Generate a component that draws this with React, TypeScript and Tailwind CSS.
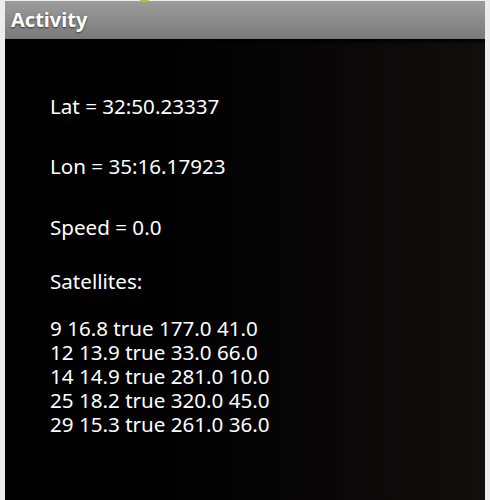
import React from "react";

const sats = [
  "9 16.8 true 177.0 41.0",
  "12 13.9 true 33.0 66.0",
  "14 14.9 true 281.0 10.0",
  "25 18.2 true 320.0 45.0",
  "29 15.3 true 261.0 36.0",
];

export default function App() {
  return (
    <div className="w-[490px] h-[500px] bg-[#ededed] pl-[5px] pr-[5px] pt-[1px] relative overflow-hidden" style={{ fontFamily: '"Noto Sans", "Open Sans", sans-serif' }}>
      <div className="absolute left-[140px] top-0 w-[9px] h-[2px] bg-[#a4c64a] rounded-b-full" />
      <div className="h-[38px] bg-gradient-to-b from-[#9c9c9c] to-[#7a7a7a] flex items-center pl-[6px]">
        <span className="text-white font-bold text-[20px] leading-none [text-shadow:0_1px_2px_rgba(0,0,0,0.6)]">Activity</span>
      </div>
      <div className="h-[461px] bg-gradient-to-r from-[#000000] via-[#050404] to-[#110e0e] text-white text-[20.6px] leading-[24px] pl-[45px] pt-[55px] relative">
        <div className="absolute left-0 right-0 top-0 h-[6px] bg-gradient-to-b from-[#000] to-transparent" />
        <div className="h-[24px]">Lat = 32:50.23337</div>
        <div className="h-[24px] mt-[36px]">Lon = 35:16.17923</div>
        <div className="h-[24px] mt-[37px]">Speed = 0.0</div>
        <div className="h-[24px] mt-[30px]">Satellites:</div>
        <div className="mt-[23px]">
          {sats.map((s) => (
            <div key={s} className="h-[24px]">{s}</div>
          ))}
        </div>
      </div>
    </div>
  );
}
